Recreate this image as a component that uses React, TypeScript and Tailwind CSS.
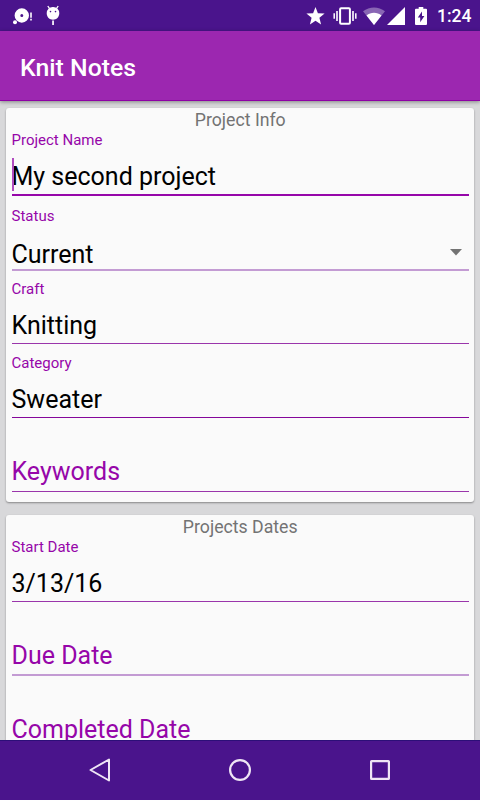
import type { ReactNode } from "react";
import clsx from "clsx";

interface FieldProps {
  label?: string;
  value?: string;
  hint?: string;
  focused?: boolean;
  className?: string;
  /** underline colour and thickness */
  lineClassName?: string;
}

function TextField({
  label,
  value,
  hint,
  focused,
  className,
  lineClassName = "h-px bg-[#9a35ab]",
}: FieldProps) {
  return (
    <div className={clsx("flex flex-col", className)}>
      <div className="h-4 text-[15px] leading-4 text-[#9606a9]">{label}</div>
      <div
        className={clsx(
          "relative flex h-[46px] items-start text-[25px] leading-8",
          hint ? "pt-[11px] text-[#9606a9]" : "pt-[13px] text-black",
        )}
      >
        {value ?? hint}
        {focused && (
          <span className="absolute top-[10px] left-0 h-[33px] w-[2px] bg-[#b14cc0]" />
        )}
      </div>
      <div className={lineClassName} />
    </div>
  );
}

function SpinnerField({ label, value }: { label: string; value: string }) {
  return (
    <div className="mt-3 flex flex-col">
      <div className="h-4 text-[15px] leading-4 text-[#9606a9]">{label}</div>
      <div className="flex h-[45px] items-center justify-between pt-[17px] pr-[7px] text-[25px] leading-[28px] text-black">
        {value}
        <svg width="12" height="7" viewBox="0 0 12 7" className="-mt-[6px]">
          <path d="M0 0h12L6 6.5z" fill="#737373" />
        </svg>
      </div>
      <div className="h-[2px] bg-[#c39bd3]" />
    </div>
  );
}

function Card({ title, className, children }: { title: string; className?: string; children: ReactNode }) {
  return (
    <section
      className={clsx(
        "mx-1.5 shrink-0 rounded-[3px] bg-[#fafafa] pr-[5px] pl-[5.5px] shadow-[0_1px_2px_rgba(0,0,0,0.38)]",
        className,
      )}
    >
      <h2 className="h-6 text-center text-[17.7px] leading-6 text-[#737373]">{title}</h2>
      {children}
    </section>
  );
}

function StatusBar() {
  return (
    <div className="flex h-[31px] shrink-0 items-center justify-between bg-[#4a148c] pr-[10px] pl-3 text-white">
      <div className="flex items-center">
        <svg width="21" height="20" viewBox="0 0 21 20" fill="currentColor">
          <path fillRule="evenodd" d="M9.800 2.300a7.200 7.200 0 1 1 0 14.400 7.200 7.200 0 0 1 0-14.400zm0 5.700a1.500 1.500 0 1 0 0 3 1.500 1.500 0 0 0 0-3z" />
          <circle cx="3" cy="16.300" r="2" />
          <path d="M18.200 6.500h1.600v5.200h-1.600zM18.200 12.800h1.600v1.600h-1.600z" />
        </svg>
        <svg width="14" height="21" viewBox="0 0 14 21" className="ml-[13px]" fill="currentColor">
          <path d="M3.600 3.600L1.800 1M10.400 3.600L12.200 1" stroke="currentColor" strokeWidth="1.300" />
          <path d="M7 2.100a6 6 0 0 1 6.300 6.200c0 3.700-2.800 6.500-6.300 6.500S.7 12 .7 8.300A6 6 0 0 1 7 2.100z" />
          <circle cx="4.500" cy="6.600" r=".8" fill="#4a148c" />
          <circle cx="9.500" cy="6.600" r=".8" fill="#4a148c" />
          <path d="M6.200 15.600h1.700V20H6.200z" />
        </svg>
      </div>
      <div className="flex items-center">
        <svg width="19" height="18" viewBox="0 0 19 18" fill="currentColor">
          <path d="M9.500 0l2.400 6.200 6.700.4-5.200 4.200 1.700 6.600-5.600-3.700-5.600 3.700 1.700-6.600L.4 6.600l6.700-.4z" />
        </svg>
        <svg width="24" height="18" viewBox="0 0 24 18" className="ml-2" fill="none" stroke="currentColor">
          <rect x="7.100" y="1.300" width="9.800" height="15.400" rx="1" strokeWidth="2" />
          <path d="M4 4v10M20 4v10" strokeWidth="1.600" />
          <path d="M1.200 6.300v5.400M22.800 6.300v5.400" strokeWidth="1.500" />
        </svg>
        <svg width="22" height="18" viewBox="0 0 22 18" className="ml-[6px]" fill="currentColor">
          <path d="M0 4.300C6.300-.8 15.700-.8 22 4.300L11 18z" opacity=".35" />
          <path d="M3.500 8.400c4.300-3.700 10.700-3.700 15 0L11 18z" />
        </svg>
        <svg width="18" height="18" viewBox="0 0 18 18" className="ml-[2px]" fill="currentColor">
          <path d="M18 0v18H0z" />
        </svg>
        <svg width="12" height="18" viewBox="0 0 12 18" className="ml-[10px]" fill="currentColor">
          <path fillRule="evenodd" d="M3.700 0h4.600v1.800H11q1 0 1 1V17q0 1-1 1H1q-1 0-1-1V2.800q0-1 1-1h2.700zM7 4.600L2.800 10.400h2.400v4.900L9.400 9H7z" />
        </svg>
        <span className="ml-[10px] w-[33px] pt-0.5 text-[17.5px] leading-[29px] font-medium">1:24</span>
      </div>
    </div>
  );
}

function NavBar() {
  return (
    <nav className="grid h-[60px] shrink-0 grid-cols-3 border-t border-[#2c0f78] bg-[#4a148c] px-[30px] pb-px text-[#efe6f5]">
      <button type="button" className="flex items-center justify-center">
        <svg width="24" height="26" viewBox="0 0 24 26" fill="none" stroke="currentColor" strokeWidth="2" strokeLinejoin="round">
          <path d="M21 2.500v21L2.500 13z" />
        </svg>
      </button>
      <button type="button" className="flex items-center justify-center">
        <svg width="24" height="24" viewBox="0 0 24 24" fill="none" stroke="currentColor" strokeWidth="2.200">
          <circle cx="12" cy="12" r="9.900" />
        </svg>
      </button>
      <button type="button" className="flex items-center justify-center">
        <svg width="22" height="22" viewBox="0 0 22 22" fill="none" stroke="currentColor" strokeWidth="2.200">
          <rect x="2.100" y="2.100" width="17.800" height="17.800" rx=".5" />
        </svg>
      </button>
    </nav>
  );
}

export default function App() {
  return (
    <div className="flex h-[800px] w-[480px] flex-col overflow-hidden bg-[#d8d8da] font-['Roboto',sans-serif]">
      <StatusBar />
      <header className="z-10 flex h-[70px] shrink-0 items-center border-b border-[#8e00a5] bg-[#9c27b0] pt-[5px] pl-5 shadow-[0_1px_4px_rgba(0,0,0,0.4)]">
        <h1 className="text-[24.8px] leading-8 font-medium text-white">Knit Notes</h1>
      </header>

      <main className="flex min-h-0 flex-1 flex-col overflow-hidden pt-[7px]">
        <Card title="Project Info" className="h-[394px]">
          <TextField
            label="Project Name"
            value="My second project"
            focused
            lineClassName="h-[2px] bg-[#9606a9]"
          />
          <SpinnerField label="Status" value="Current" />
          <TextField label="Craft" value="Knitting" className="mt-[10px]" />
          <TextField label="Category" value="Sweater" className="mt-[11px]" lineClassName="h-px bg-[#85069a]" />
          <TextField hint="Keywords" className="mt-[11px]" />
        </Card>

        <Card title="Projects Dates" className="mt-[13px]">
          <TextField label="Start Date" value="3/13/16" />
          <TextField hint="Due Date" className="mt-[11px]" lineClassName="-mt-px h-[2px] bg-[#c39bd3]" />
          <TextField hint="Completed Date" className="mt-[11px]" />
        </Card>
      </main>

      <NavBar />
    </div>
  );
}
